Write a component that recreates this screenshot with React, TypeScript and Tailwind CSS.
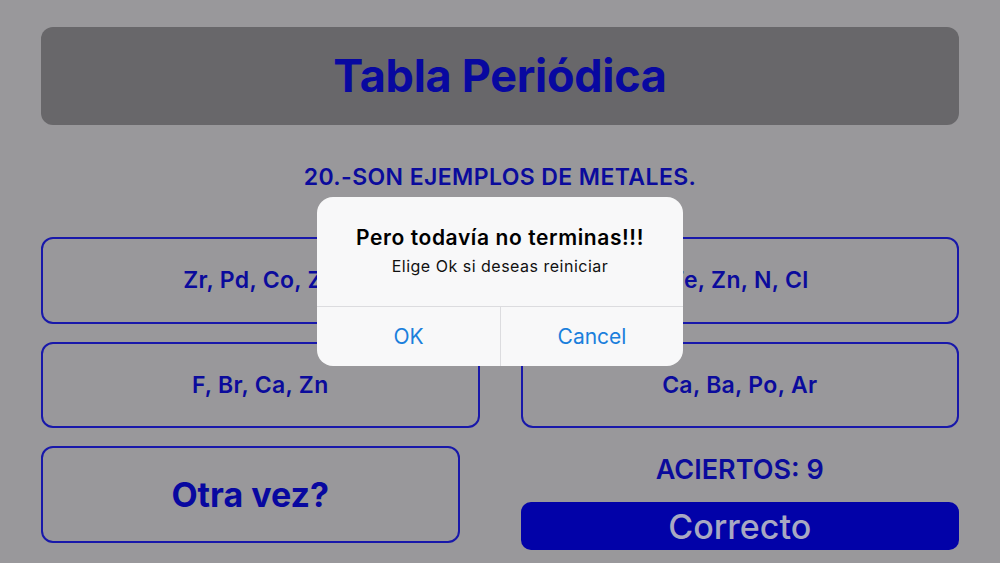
const font = { fontFamily: "Inter, 'Liberation Sans', sans-serif" };

function Answer({ label }: { label: string }) {
  return (
    <button
      type="button"
      className="flex h-full w-full items-center justify-center rounded-[12px] border-2 border-[#1818aa] text-[23px] font-semibold tracking-[0.3px] text-[#0b0b9c]"
    >
      {label}
    </button>
  );
}

export default function App() {
  return (
    <div
      className="relative flex h-[563px] w-[1000px] flex-col overflow-hidden bg-[#99989b] px-[41px] pt-[27px]"
      style={font}
    >
      <header className="flex h-[98px] items-center justify-center rounded-[12px] bg-[#68676a]">
        <h1 className="text-[45px] font-bold tracking-[-0.3px] text-[#0808a0]">
          Tabla Periódica
        </h1>
      </header>

      <p className="mt-[39px] text-center text-[23px] font-semibold leading-[26px] tracking-[0.4px] text-[#0b0b9c]">
        20.-SON EJEMPLOS DE METALES.
      </p>

      <div className="mt-[47px] grid grid-cols-2 gap-x-[41px] gap-y-[18px]">
        <div className="h-[87px]">
          <Answer label="Zr, Pd, Co, Zn" />
        </div>
        <div className="h-[87px]">
          <Answer label="Fe, Zn, N, Cl" />
        </div>
        <div className="h-[86px]">
          <Answer label="F, Br, Ca, Zn" />
        </div>
        <div className="h-[86px]">
          <Answer label="Ca, Ba, Po, Ar" />
        </div>
      </div>

      <div className="mt-[18px] grid grid-cols-2 gap-x-[41px]">
        <div className="pr-[20px]">
          <button
            type="button"
            className="flex h-[97px] w-full items-center justify-center rounded-[12px] border-2 border-[#1818aa] text-[34px] font-bold text-[#0808a0]"
          >
            Otra vez?
          </button>
        </div>
        <div className="flex flex-col items-center">
          <p className="mt-[8px] text-[27px] font-semibold leading-[32px] text-[#0b0b9c]">
            ACIERTOS: 9
          </p>
          <button
            type="button"
            className="mt-[16px] flex h-[48px] w-full items-center justify-center rounded-[10px] bg-[#0202a8] text-[34px] font-medium text-[#a8a8c2]"
          >
            Correcto
          </button>
        </div>
      </div>

      <div className="absolute left-[317px] top-[197px] flex h-[169px] w-[366px] flex-col overflow-hidden rounded-[16px] bg-[#f8f8f9]">
        <div className="flex h-[109px] flex-col items-center pt-[28px]">
          <p className="text-[21px] font-semibold leading-[26px] tracking-[0.6px] text-black">
            Pero todavía no terminas!!!
          </p>
          <p className="mt-[5px] text-[16px] leading-[20px] tracking-[0.5px] text-[#111]">
            Elige Ok si deseas reiniciar
          </p>
        </div>
        <div className="grid h-[60px] grid-cols-2 border-t border-[#dcdcdf]">
          <button type="button" className="text-[21px] text-[#1b7fdc]">
            OK
          </button>
          <button
            type="button"
            className="border-l border-[#dcdcdf] text-[21px] text-[#1b7fdc]"
          >
            Cancel
          </button>
        </div>
      </div>
    </div>
  );
}
